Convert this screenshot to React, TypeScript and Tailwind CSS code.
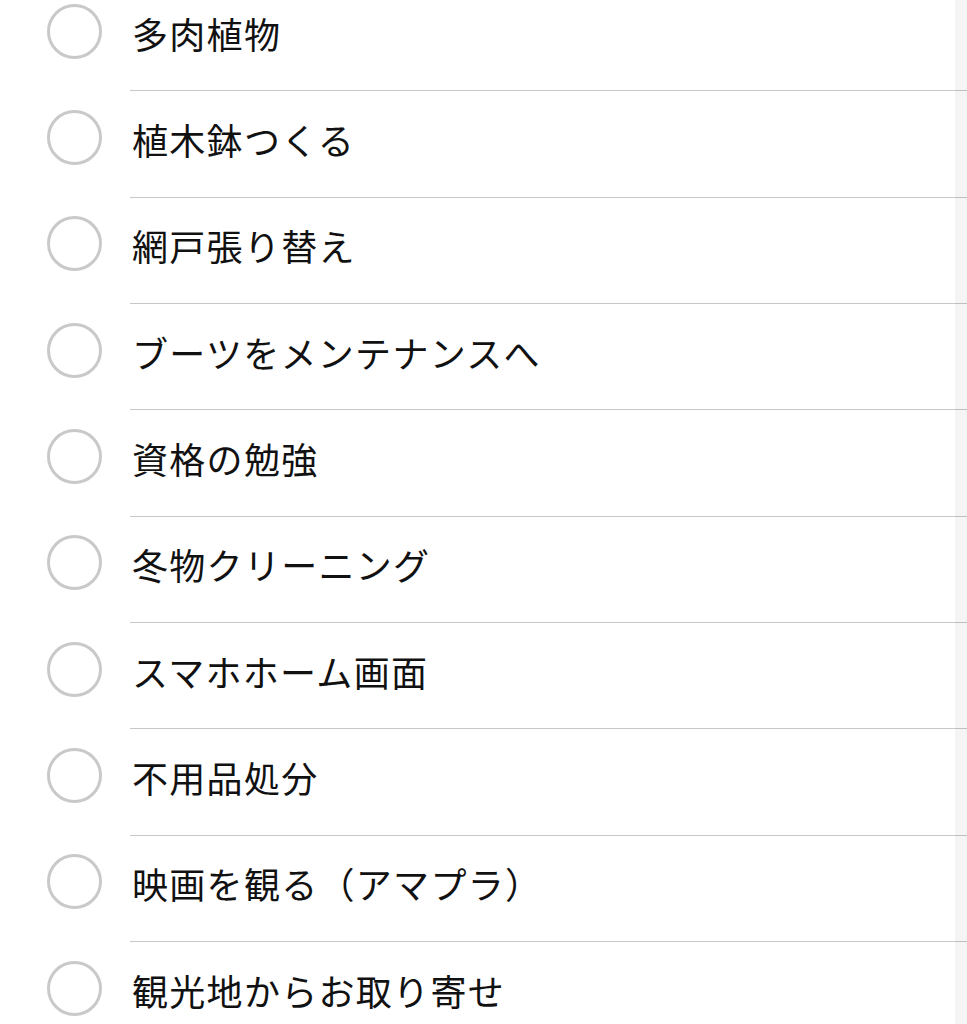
const items = [
  "多肉植物",
  "植木鉢つくる",
  "網戸張り替え",
  "ブーツをメンテナンスへ",
  "資格の勉強",
  "冬物クリーニング",
  "スマホホーム画面",
  "不用品処分",
  "映画を観る（アマプラ）",
  "観光地からお取り寄せ",
];

export default function App() {
  return (
    <div
      className="relative w-full h-[1024px] overflow-hidden bg-white text-[#111]"
      style={{ fontFamily: '"Noto Sans CJK JP", "Noto Sans", sans-serif' }}
    >
      {/* task rows */}
      <ul className="mt-[-15px]">
        {items.map((t, i) => (
          <li key={i} className="flex h-[106.35px]">
            <div className="w-[130px] flex-none flex items-center pl-[47px] pb-[14px]">
              <div className="w-[55px] h-[55px] rounded-full border-[3px] border-[#c9c9c9]" />
            </div>
            <div className="flex-1 flex items-center border-b border-[#c8c8c8] pl-[2px] pb-[10px]">
              <span className="text-[36px] leading-none tracking-[1.3px]">{t}</span>
            </div>
          </li>
        ))}
      </ul>
      {/* scroll strip on the right edge */}
      <div className="absolute top-0 right-0 h-full w-[12px] bg-black/[0.04]" />
    </div>
  );
}
